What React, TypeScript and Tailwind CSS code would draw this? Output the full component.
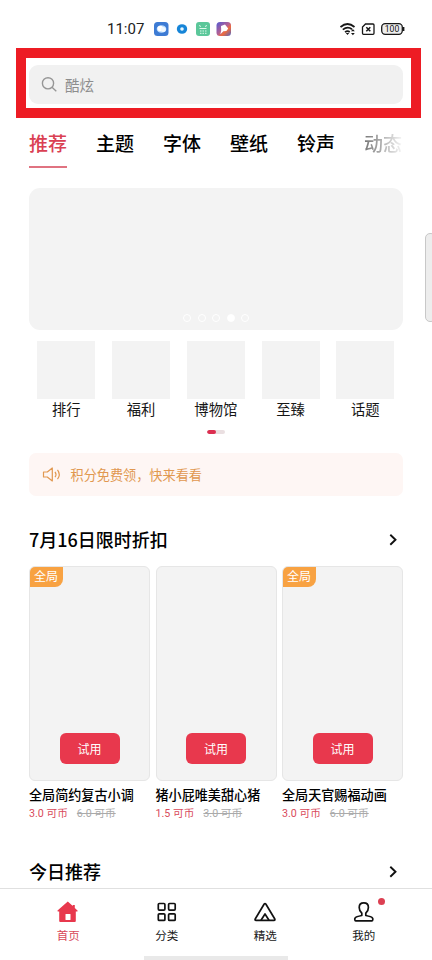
import React from "react";

const tabs = ["推荐", "主题", "字体", "壁纸", "铃声"];
const shortcuts = ["排行", "福利", "博物馆", "至臻", "话题"];
const themes = [
  { name: "全局简约复古小调", price: "3.0 可币", old: "6.0 可币", global: true },
  { name: "猪小屁唯美甜心猪", price: "1.5 可币", old: "3.0 可币", global: false },
  { name: "全局天官赐福动画", price: "3.0 可币", old: "6.0 可币", global: true },
];

function StatusBar() {
  return (
    <div className="flex h-12 shrink-0 items-center pt-[10px] pr-[27px] pl-[107px]">
      <span className="w-[47px] font-['Roboto',sans-serif] text-[15px] leading-5 text-[#222]">11:07</span>
      <svg className="shrink-0" width="78" height="16" viewBox="0 0 78 16">
        <rect x="0" y="1" width="14.5" height="14" rx="3.5" fill="#3d7bd4" />
        <ellipse cx="7.5" cy="8" rx="4.8" ry="3.8" fill="#b9dcff" />
        <circle cx="6.3" cy="7.5" r="2.8" fill="#fff" />
        <circle cx="9.3" cy="8.4" r="2.5" fill="#f0f8ff" />
        <ellipse cx="28" cy="8" rx="5.2" ry="4.8" fill="#1685d8" />
        <circle cx="28" cy="8" r="1.8" fill="#e8f8ff" />
        <rect x="42" y="1" width="14" height="14" rx="3" fill="#5bc79a" />
        <path d="M45 4.5l2 1M53 4.5l-2 1M45.5 7.5h7M46 10h1.5M48.5 10h1.5M51 10h1.5M46 12.3h1.5M48.5 12.3h1.5M51 12.3h1.5" stroke="#dff8ec" strokeWidth="1" />
        <defs>
          <linearGradient id="launcher" x1="0" y1="0" x2="1" y2="1">
            <stop offset="0.1" stopColor="#665bc7" />
            <stop offset="0.5" stopColor="#b76090" />
            <stop offset="0.65" stopColor="#ef6b3c" />
            <stop offset="1" stopColor="#4b63c8" />
          </linearGradient>
        </defs>
        <rect x="62.5" y="1" width="14.5" height="14" rx="3.5" fill="url(#launcher)" />
        <path d="M67 5l4-1.5 3.2 4-1.8 2.5-3 .3-3 3 .8-4z" fill="#fff" />
      </svg>
      <svg className="ml-auto shrink-0" width="65" height="16" viewBox="0 0 65 16" fill="none">
        <g stroke="#171717" strokeWidth="1.7">
          <path d="M.5 6Q7.5 0 14.5 6" />
          <path d="M2.8 8.7Q7.5 4.8 12 8.2" />
          <path d="M5 11.2Q7.5 9.2 9.7 11" />
        </g>
        <path d="M5.8 12l1.7 2 1.7-2z M11 10.3l1.9-2.2 1.9 2.2zM11 12l1.9 2.2 1.9-2.2z" fill="#171717" />
        <path d="M25.5 3h7.5q1 0 1 1v8.3q0 1-1 1H23.5q-1 0-1-1V6z" stroke="#171717" strokeWidth="1.3" />
        <path d="M26.3 6.3l4 4M30.3 6.3l-4 4" stroke="#171717" strokeWidth="1.5" />
        <rect x="41.7" y="2.7" width="20.6" height="10.6" rx="3.5" fill="#eee" stroke="#171717" strokeWidth="1.3" />
        <path d="M63.6 6v4" stroke="#171717" strokeWidth="1.6" />
        <text x="52" y="11.2" textAnchor="middle" fontSize="8.6" fontFamily="Roboto, sans-serif" fill="#111">100</text>
      </svg>
    </div>
  );
}

function SearchBox() {
  return (
    <div className="mr-[11px] ml-4 h-[70px] shrink-0 border-10 border-[#ed1c24] pt-[7px] pr-2 pl-[3px]">
      <div className="flex h-[39px] items-center rounded-[9px] bg-[#f1f1f1] pl-3">
        <svg width="17" height="17" viewBox="0 0 17 17" fill="none" stroke="#969696" strokeWidth="1.4">
          <circle cx="7" cy="7.3" r="5.6" />
          <path d="M11 11.3l4.3 4" />
        </svg>
        <span className="ml-[7px] text-[14.5px] leading-5 text-[#8d8d8d]">酷炫</span>
      </div>
    </div>
  );
}

function Tabs() {
  return (
    <div className="flex h-[70px] shrink-0 gap-[29px] overflow-hidden pt-[11px] pl-[29px] text-[19px] leading-[27px] font-medium">
      {tabs.map((tab, i) => (
        <div key={tab} className={i === 0 ? "h-[39px] w-[38px] shrink-0 border-b-2 border-[#e07381] whitespace-nowrap text-[#da4053]" : "w-[38px] shrink-0 whitespace-nowrap text-black"}>
          {tab}
        </div>
      ))}
      <div className="h-[27px] w-[39px] shrink-0 bg-linear-to-r from-[#777] to-[#f8f8f8] bg-clip-text whitespace-nowrap text-transparent">动态</div>
    </div>
  );
}

function SectionTitle({ children }: { children: React.ReactNode }) {
  return (
    <div className="flex h-7 shrink-0 items-center justify-between pr-[34px] pl-[29px] text-[18px] font-medium text-black">
      <h2 className="pb-px">{children}</h2>
      <svg width="9" height="14" viewBox="0 0 9 14" fill="none" stroke="#111" strokeWidth="1.9">
        <path d="M1.3 1.7l5.2 5-5.2 5" />
      </svg>
    </div>
  );
}

function NavItem({ label, active, children }: { label: string; active?: boolean; children: React.ReactNode }) {
  return (
    <div className={`relative flex w-[98.5px] flex-col items-center text-[11.5px] leading-[18px] ${active ? "text-[#d84758]" : "text-[#171717]"}`}>
      <svg width="24" height="24" viewBox="0 0 24 24" fill="none" stroke="#111" strokeWidth="1.7" strokeLinejoin="round">
        {children}
      </svg>
      <span className="mt-[2px]">{label}</span>
    </div>
  );
}

export default function App() {
  return (
    <div className="relative flex h-[960px] w-[432px] flex-col overflow-hidden bg-white font-['Noto_Sans_CJK_SC','Noto_Sans',sans-serif]">
      <StatusBar />
      <SearchBox />
      <Tabs />

      <div className="mx-[29px] flex h-[142px] shrink-0 items-end justify-center gap-[6.5px] rounded-[11px] bg-[#f3f3f3] pb-2">
        {[0, 1, 2, 3, 4].map((dot) => (
          <span key={dot} className={`size-2 rounded-full border border-white ${dot === 3 ? "bg-white" : ""}`} />
        ))}
      </div>
      <div className="absolute top-[233px] right-[-4px] h-[89px] w-[11px] rounded-[5px] border border-[#c8c8c8] bg-[#ededed]" />

      <div className="mt-[11px] mr-[29.4px] ml-[29px] grid shrink-0 grid-cols-5">
        {shortcuts.map((name) => (
          <div key={name} className="flex flex-col items-center">
            <div className="size-[58px] bg-[#f3f3f3]" />
            <span className="-mt-px text-[14.3px] leading-[21px] whitespace-nowrap text-[#161616]">{name}</span>
          </div>
        ))}
      </div>
      <div className="mx-auto mt-[11px] h-1 w-[18px] shrink-0 overflow-hidden rounded-full bg-[#eadfe1]">
        <div className="h-full w-[9px] rounded-full bg-[#dc2e50]" />
      </div>

      <div className="mx-[29px] mt-[19px] flex h-[43px] shrink-0 items-center rounded-[7px] bg-[#fef6f4] pl-[13px] text-[#e19850]">
        <svg width="20" height="18" viewBox="0 0 20 18" fill="none" stroke="currentColor" strokeWidth="1.2" strokeLinejoin="round">
          <path d="M1.5 6h3.8l5-4v13l-5-4H1.5z" />
          <path d="M13 5.8q2 2.7 0 5.4M15.5 3.8q3.5 4.7 0 9.4" />
        </svg>
        <span className="ml-[8.5px] text-[13.15px] leading-5">积分免费领，快来看看</span>
      </div>

      <div className="mt-[30px] shrink-0">
        <SectionTitle>7月16日限时折扣</SectionTitle>
      </div>
      <div className="mx-[29px] mt-[12px] grid shrink-0 grid-cols-3 gap-[5.5px]">
        {themes.map((theme) => (
          <div key={theme.name} className="min-w-0">
            <div className="flex h-[215px] flex-col items-center justify-between overflow-hidden rounded-[6px] border border-[#e6e6e6] bg-[#f3f3f3] pb-4">
              {theme.global ? (
                <span className="-mt-px -ml-px h-[21px] w-[34px] self-start rounded-br-[8px] bg-[#f8a242] text-center text-[12px] leading-[20px] text-white">全局</span>
              ) : (
                <span />
              )}
              <button className="h-[31px] w-[60px] rounded-[6px] bg-[#e8384d] text-[12px] leading-[31px] text-white">试用</button>
            </div>
            <div className="mt-[4px] text-[13.1px] leading-5 font-medium whitespace-nowrap text-black">{theme.name}</div>
            <div className="flex gap-[9px] font-['Roboto','Noto_Sans_CJK_SC',sans-serif] text-[10.7px] leading-[18px] whitespace-nowrap">
              <span className="text-[#d94a5b]">{theme.price}</span>
              <span className="text-[#aaa] line-through">{theme.old}</span>
            </div>
          </div>
        ))}
      </div>

      <div className="mt-[35px] shrink-0">
        <SectionTitle>今日推荐</SectionTitle>
      </div>

      <nav className="absolute inset-x-0 bottom-0 flex h-[72px] border-t border-[#e0e0e0] bg-white pt-[11px] pl-[19px]">
        <NavItem label="首页" active>
          <path d="M11.8 1.5L1.5 10.5q-.5 1 .8 1h.9V21q0 1 1 1h14.6q1 0 1-1v-9.5h1.2q1.2 0 .5-1l-2.7-2.4V5h-2v1z" fill="#e8384d" stroke="none" />
          <rect x="9.5" y="14" width="5" height="6" rx=".5" fill="#fff" stroke="none" />
        </NavItem>
        <NavItem label="分类">
          <rect x="3.3" y="3.5" width="6.6" height="6.6" rx="1" />
          <rect x="13.6" y="3.5" width="6.6" height="6.6" rx="1" />
          <rect x="3.3" y="13.8" width="6.6" height="6.6" rx="1" />
          <rect x="13.6" y="13.8" width="6.6" height="6.6" rx="1" />
        </NavItem>
        <NavItem label="精选">
          <path d="M11.2 4q.8-1 1.6 0l9 15q.5 1.3-.8 1.3H3q-1.3 0-.8-1.3z" />
          <path d="M8 20.3l4-6.3 4 6.3" />
        </NavItem>
        <NavItem label="我的">
          <path d="M9.8 15.5v-2.3C8.1 11.6 7.2 9.6 7.2 7.4c0-2.8 1.8-4.6 4.6-4.6s4.6 1.8 4.6 4.6c0 2.2-.9 4.2-2.6 5.8v2.3c3 .6 5.9 1.3 6.7 2.5.5.7.5 2.9-.6 2.9H3.7c-1.1 0-1.1-2.2-.6-2.9.8-1.2 3.7-1.9 6.7-2.5z" />
        </NavItem>
        <span className="absolute top-[9px] left-[378px] size-[7px] rounded-full bg-[#dc4052]" />
        <span className="absolute bottom-0 left-[144px] h-1 w-36 bg-[#e9e9e9]" />
      </nav>
    </div>
  );
}
